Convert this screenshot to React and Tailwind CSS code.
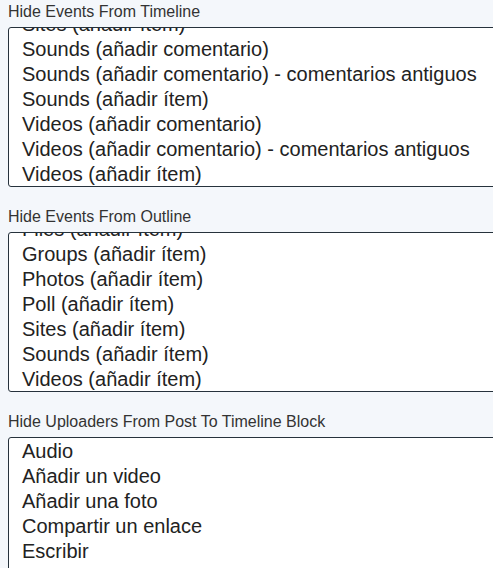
import React from 'react'

const sections = [
  {
    label: 'Hide Events From Timeline',
    offset: '-mt-[16px]',
    items: [
      'Sites (añadir ítem)',
      'Sounds (añadir comentario)',
      'Sounds (añadir comentario) - comentarios antiguos',
      'Sounds (añadir ítem)',
      'Videos (añadir comentario)',
      'Videos (añadir comentario) - comentarios antiguos',
      'Videos (añadir ítem)',
    ],
  },
  {
    label: 'Hide Events From Outline',
    offset: '-mt-[16px]',
    items: [
      'Files (añadir ítem)',
      'Groups (añadir ítem)',
      'Photos (añadir ítem)',
      'Poll (añadir ítem)',
      'Sites (añadir ítem)',
      'Sounds (añadir ítem)',
      'Videos (añadir ítem)',
    ],
  },
  {
    label: 'Hide Uploaders From Post To Timeline Block',
    offset: 'mt-px',
    items: [
      'Audio',
      'Añadir un video',
      'Añadir una foto',
      'Compartir un enlace',
      'Escribir',
      'Evento',
      'Encuesta',
    ],
  },
]

function MultiSelect({ items, offset }){
  return (
    <div className="w-[520px] h-[160px] border border-[#26323c] rounded-[3px] bg-white overflow-hidden">
      <div className={offset}>
        {items.map((it, i) => (
          <div key={i} className="h-[25px] leading-[25px] pl-[13px] text-[20px] text-[#222] whitespace-nowrap">{it}</div>
        ))}
      </div>
    </div>
  )
}

export default function App(){
  return (
    <div className="w-full h-[568px] overflow-hidden bg-[#f4f7fb] pl-2 pt-[3px]" style={{ fontFamily: '"Liberation Sans", Arial, sans-serif' }}>
      {sections.map((s, i) => (
        <div key={i} className={i > 0 ? 'mt-[21px]' : ''}>
          <div className="text-[16px] leading-[18px] text-[#333] mb-[6px]">{s.label}</div>
          <MultiSelect items={s.items} offset={s.offset} />
        </div>
      ))}
    </div>
  )
}
